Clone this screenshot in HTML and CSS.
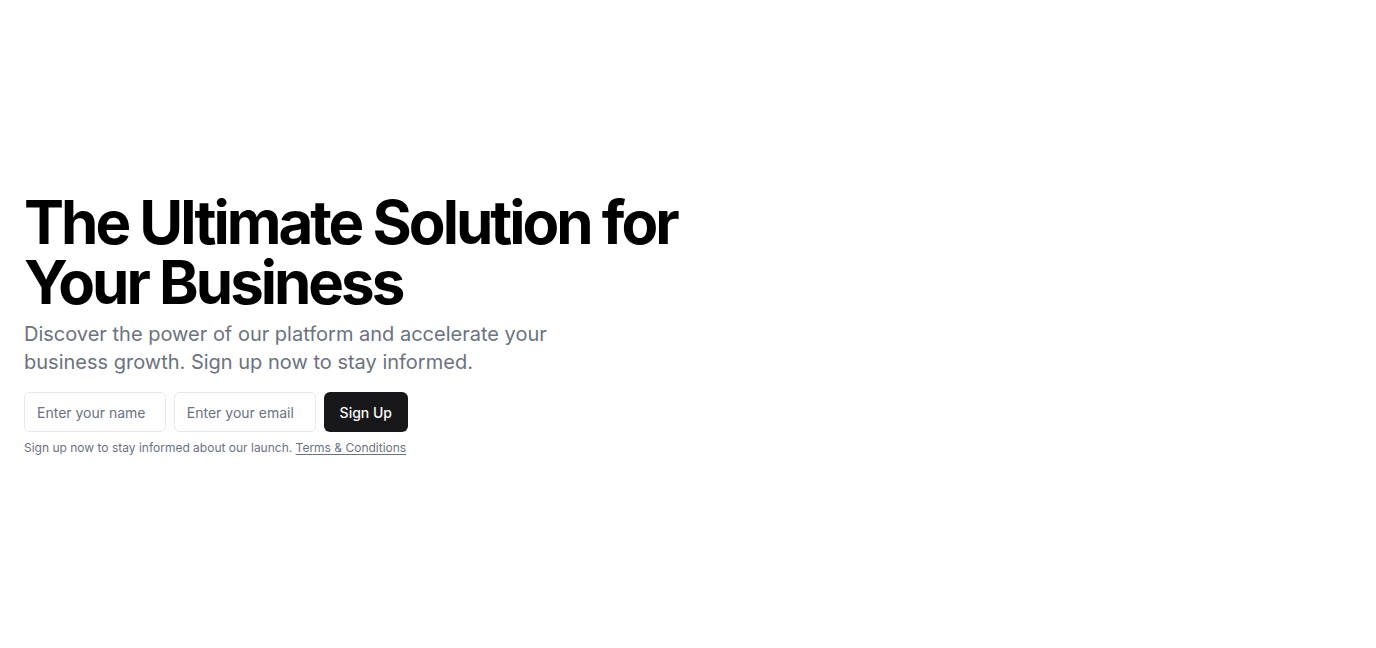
FILE: index.html
```html
<!DOCTYPE html>
<html lang="en">
<head>
<meta charset="utf-8">
<title>The Ultimate Solution for Your Business</title>
<link rel="stylesheet" href="styles.css">
</head>
<body>
<main class="hero">
  <div class="hero-inner">
    <div class="intro">
      <h1 class="title">The Ultimate Solution for Your Business</h1>
      <p class="lead">Discover the power of our platform and accelerate your business growth. Sign up now to stay informed.</p>
    </div>
    <div class="signup">
      <form class="signup-form">
        <input class="field" type="text" placeholder="Enter your name">
        <input class="field" type="email" placeholder="Enter your email">
        <button class="btn" type="submit">Sign Up</button>
      </form>
      <p class="note">Sign up now to stay informed about our launch. <a class="note-link" href="#">Terms &amp; Conditions</a></p>
    </div>
  </div>
</main>
</body>
</html>
```

FILE: styles.css
```css
* { box-sizing: border-box; }
html, body { margin: 0; padding: 0; }
body {
  font-family: Inter, "Noto Sans", sans-serif;
  background: #ffffff;
  color: #111827;
}
.hero {
  min-height: 648px;
  display: flex;
  align-items: center;
  padding: 0 24px;
}
.hero-inner {
  display: flex;
  flex-direction: column;
  gap: 16px;
}
.intro {
  display: flex;
  flex-direction: column;
  gap: 8px;
}
.title {
  margin: 0;
  font-size: 60px;
  line-height: 60px;
  font-weight: 700;
  letter-spacing: -0.05em;
  color: #000000;
  max-width: 700px;
}
.lead {
  margin: 0;
  font-size: 20px;
  line-height: 28px;
  color: #6b7280;
  max-width: 600px;
}
.signup {
  width: 384px;
  display: flex;
  flex-direction: column;
  gap: 8px;
}
.signup-form {
  display: flex;
  gap: 8px;
  margin: 0;
}
.field {
  flex: 1 1 0;
  min-width: 0;
  height: 40px;
  border: 1px solid #e5e7eb;
  border-radius: 6px;
  padding: 0 12px;
  font-family: inherit;
  font-size: 14px;
  color: #111827;
  background: #ffffff;
  outline: none;
}
.field::placeholder { color: #6b7280; }
.btn {
  flex: 0 0 auto;
  height: 40px;
  padding: 0 16px;
  border: none;
  border-radius: 6px;
  background: #18181b;
  color: #fafafa;
  font-family: inherit;
  font-size: 14px;
  font-weight: 500;
  cursor: pointer;
}
.note {
  margin: 0;
  font-size: 12px;
  line-height: 16px;
  color: #6b7280;
  white-space: nowrap;
}
.note-link {
  color: #6b7280;
  text-decoration: underline;
  text-underline-offset: 2px;
}
```
